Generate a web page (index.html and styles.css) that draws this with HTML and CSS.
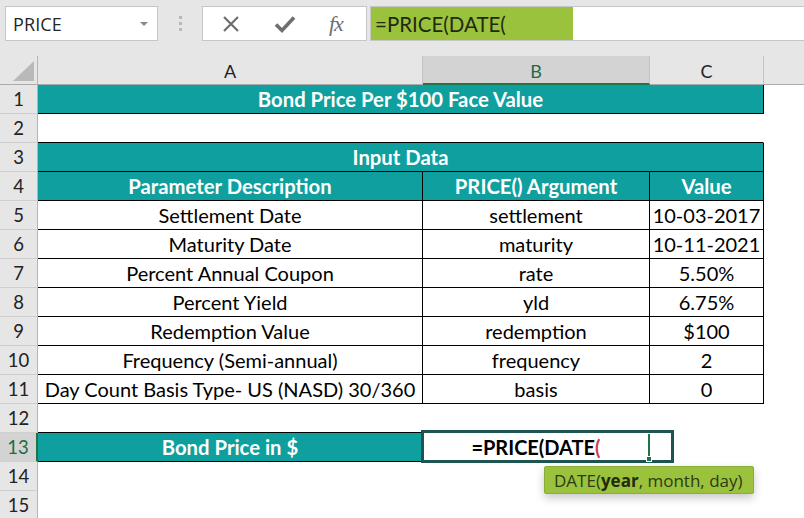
FILE: index.html
```html
<!DOCTYPE html>
<html>
<head>
<meta charset="utf-8">
<link rel="stylesheet" href="styles.css">
</head>
<body>
<div class="app">
  <div class="topbar">
    <div class="namebox"><span class="nb-text">PRICE</span><span class="nb-arrow"></span></div>
    <div class="grip"><i></i><i></i><i></i></div>
    <div class="fxbox">
      <svg class="ico" width="20" height="20" viewBox="0 0 20 20"><path d="M3 3 L17 17 M17 3 L3 17" stroke="#6e6e6e" stroke-width="2.2" fill="none"/></svg>
      <svg class="ico" width="22" height="20" viewBox="0 0 22 20"><path d="M2 10.5 L8 16.5 L20 3.5" stroke="#6e6e6e" stroke-width="3.6" fill="none" stroke-linejoin="miter"/></svg>
      <span class="fx">fx</span>
    </div>
    <div class="formula"><div class="formula-hl">=PRICE(DATE(</div></div>
  </div>

  <div class="sheet">
    <div class="hd corner"><span class="tri"></span></div>
    <div class="hd">A</div>
    <div class="hd sel">B</div>
    <div class="hd">C</div>
    <div class="hd last"></div>

    <div class="rh">1</div>
    <div class="c teal span3 bk-b bk-r">Bond Price Per $100 Face Value</div>
    <div class="c"></div>

    <div class="rh">2</div>
    <div class="c span3 bk-b"></div>
    <div class="c"></div>

    <div class="rh">3</div>
    <div class="c teal span3 bk-b bk-r">Input Data</div>
    <div class="c"></div>

    <div class="rh">4</div>
    <div class="c teal bk-b bk-r">Parameter Description</div>
    <div class="c teal bk-b bk-r">PRICE() Argument</div>
    <div class="c teal bk-b bk-r">Value</div>
    <div class="c"></div>

    <div class="rh">5</div>
    <div class="c bk-b bk-r">Settlement Date</div>
    <div class="c bk-b bk-r">settlement</div>
    <div class="c bk-b bk-r">10-03-2017</div>
    <div class="c"></div>

    <div class="rh">6</div>
    <div class="c bk-b bk-r">Maturity Date</div>
    <div class="c bk-b bk-r">maturity</div>
    <div class="c bk-b bk-r">10-11-2021</div>
    <div class="c"></div>

    <div class="rh">7</div>
    <div class="c bk-b bk-r">Percent Annual Coupon</div>
    <div class="c bk-b bk-r">rate</div>
    <div class="c bk-b bk-r">5.50%</div>
    <div class="c"></div>

    <div class="rh">8</div>
    <div class="c bk-b bk-r">Percent Yield</div>
    <div class="c bk-b bk-r">yld</div>
    <div class="c bk-b bk-r">6.75%</div>
    <div class="c"></div>

    <div class="rh">9</div>
    <div class="c bk-b bk-r">Redemption Value</div>
    <div class="c bk-b bk-r">redemption</div>
    <div class="c bk-b bk-r">$100</div>
    <div class="c"></div>

    <div class="rh">10</div>
    <div class="c bk-b bk-r">Frequency (Semi-annual)</div>
    <div class="c bk-b bk-r">frequency</div>
    <div class="c bk-b bk-r">2</div>
    <div class="c"></div>

    <div class="rh">11</div>
    <div class="c bk-b bk-r">Day Count Basis Type- US (NASD) 30/360</div>
    <div class="c bk-b bk-r">basis</div>
    <div class="c bk-b bk-r">0</div>
    <div class="c"></div>

    <div class="rh">12</div>
    <div class="c bk-b"></div>
    <div class="c bk-b"></div>
    <div class="c"></div>
    <div class="c"></div>

    <div class="rh sel">13</div>
    <div class="c teal bk-b bk-r">Bond Price in $</div>
    <div class="c editing"><span>=PRICE(DATE<span class="red">(</span></span></div>
    <div class="c"></div>
    <div class="c"></div>

    <div class="rh">14</div>
    <div class="c"></div><div class="c"></div><div class="c"></div><div class="c"></div>

    <div class="rh">15</div>
    <div class="c"></div><div class="c"></div><div class="c"></div><div class="c"></div>
  </div>

  <div class="selbox"><span class="cursor"></span><span class="handle"></span></div>
  <div class="tip">DATE(<b>year</b>, month, day)</div>
</div>
</body>
</html>
```
FILE: styles.css
```css
html, body {
  margin: 0;
  padding: 0;
  background: #ffffff;
}
.app {
  position: relative;
  width: 804px;
  height: 518px;
  overflow: hidden;
  font-family: "Lato", "Open Sans", sans-serif;
}

/* ---------- top formula bar ---------- */
.topbar {
  height: 56px;
  box-sizing: border-box;
  padding: 6px 0 0 5px;
  background: #e6e6e6;
  display: flex;
  align-items: flex-start;
}
.namebox {
  width: 153px;
  height: 35px;
  box-sizing: border-box;
  border: 1px solid #c6c6c6;
  background: #ffffff;
  display: flex;
  align-items: center;
  justify-content: space-between;
  padding: 0 9px 0 7px;
}
.nb-text {
  font-family: "Open Sans", "Noto Sans", sans-serif;
  font-size: 18px;
  color: #262626;
  letter-spacing: 0.1px;
}
.nb-arrow {
  width: 0;
  height: 0;
  border-left: 4px solid transparent;
  border-right: 4px solid transparent;
  border-top: 4px solid #8a8a8a;
}
.grip {
  width: 44px;
  height: 35px;
  display: flex;
  flex-direction: column;
  align-items: center;
  justify-content: center;
  gap: 3px;
}
.grip i {
  display: block;
  width: 3px;
  height: 3px;
  background: #b9b9b9;
}
.fxbox {
  width: 165px;
  height: 35px;
  box-sizing: border-box;
  border: 1px solid #c6c6c6;
  background: #ffffff;
  display: flex;
  align-items: center;
  padding: 0 0 0 18px;
  gap: 33px;
}
.fx {
  font-family: "Liberation Serif", serif;
  font-style: italic;
  font-size: 22px;
  color: #6e6e6e;
  letter-spacing: -1px;
}
.formula {
  flex: 1;
  margin-left: 3px;
  height: 35px;
  box-sizing: border-box;
  border: 1px solid #c6c6c6;
  border-right: none;
  background: #ffffff;
  display: flex;
}
.formula-hl {
  width: 202px;
  background: #9bc23c;
  font-size: 20.5px;
  color: #1f2a10;
  display: flex;
  align-items: center;
  padding-left: 4px;
  box-sizing: border-box;
}

/* ---------- sheet grid ---------- */
.sheet {
  display: grid;
  grid-template-columns: 38px 385px 227px 114px 1fr;
  grid-auto-rows: 29px;
}
.hd {
  background: #e6e6e6;
  border-right: 1px solid #c3c3c3;
  border-bottom: 1px solid #ababab;
  box-sizing: border-box;
  display: flex;
  align-items: center;
  justify-content: center;
  font-size: 18px;
  color: #222222;
  padding-top: 2px;
}
.hd.corner {
  position: relative;
  border-right-color: #b5b5b5;
}
.hd.last {
  border-right: none;
}
.hd.sel {
  background: #d3d3d3;
  color: #1e6b46;
  border-bottom: 2px solid #217346;
  padding-top: 3px;
}
.tri {
  position: absolute;
  right: 3px;
  bottom: 3px;
  width: 0;
  height: 0;
  border-left: 21px solid transparent;
  border-bottom: 20px solid #b9b9b9;
}
.rh {
  background: #e6e6e6;
  border-right: 1px solid #b5b5b5;
  border-bottom: 1px solid #cfcfcf;
  box-sizing: border-box;
  display: flex;
  align-items: center;
  justify-content: center;
  font-size: 18.5px;
  color: #222222;
}
.rh.sel {
  background: #d3d3d3;
  color: #1e6b46;
  border-right: 2px solid #217346;
}
.c {
  box-sizing: border-box;
  border-right: 1px solid transparent;
  border-bottom: 1px solid transparent;
  display: flex;
  align-items: center;
  justify-content: center;
  font-size: 20px;
  color: #000000;
  white-space: nowrap;
  overflow: hidden;
}
.span3 {
  grid-column: span 3;
}
.bk-b {
  border-bottom-color: #000000;
}
.bk-r {
  border-right-color: #000000;
}
.teal {
  background: #0e9f9e;
  color: #ffffff;
  font-weight: 700;
  font-size: 20.3px;
}
.editing {
  font-weight: 700;
  overflow: visible;
}
.red {
  color: #d0404f;
}

/* ---------- overlays ---------- */
.selbox {
  position: absolute;
  left: 421px;
  top: 430px;
  width: 253px;
  height: 33px;
  box-sizing: border-box;
  border: 3px solid #1e5552;
}
.cursor {
  position: absolute;
  left: 224px;
  top: 1px;
  width: 2px;
  height: 24px;
  background: #217346;
}
.handle {
  position: absolute;
  left: 222px;
  top: 23px;
  width: 6px;
  height: 6px;
  background: #217346;
  border: 1px solid #ffffff;
  box-sizing: border-box;
}
.tip {
  position: absolute;
  left: 544px;
  top: 466px;
  width: 210px;
  height: 28px;
  box-sizing: border-box;
  background: #9bc23c;
  border: 1px solid #8aac38;
  border-radius: 2px;
  box-shadow: 0 4px 10px rgba(0, 0, 0, 0.22);
  font-family: "Open Sans", "Noto Sans", sans-serif;
  font-size: 17px;
  color: #2d3a17;
  display: flex;
  align-items: center;
  padding-left: 9px;
  white-space: nowrap;
}
.tip b {
  font-weight: 700;
  color: #222b10;
}
```
